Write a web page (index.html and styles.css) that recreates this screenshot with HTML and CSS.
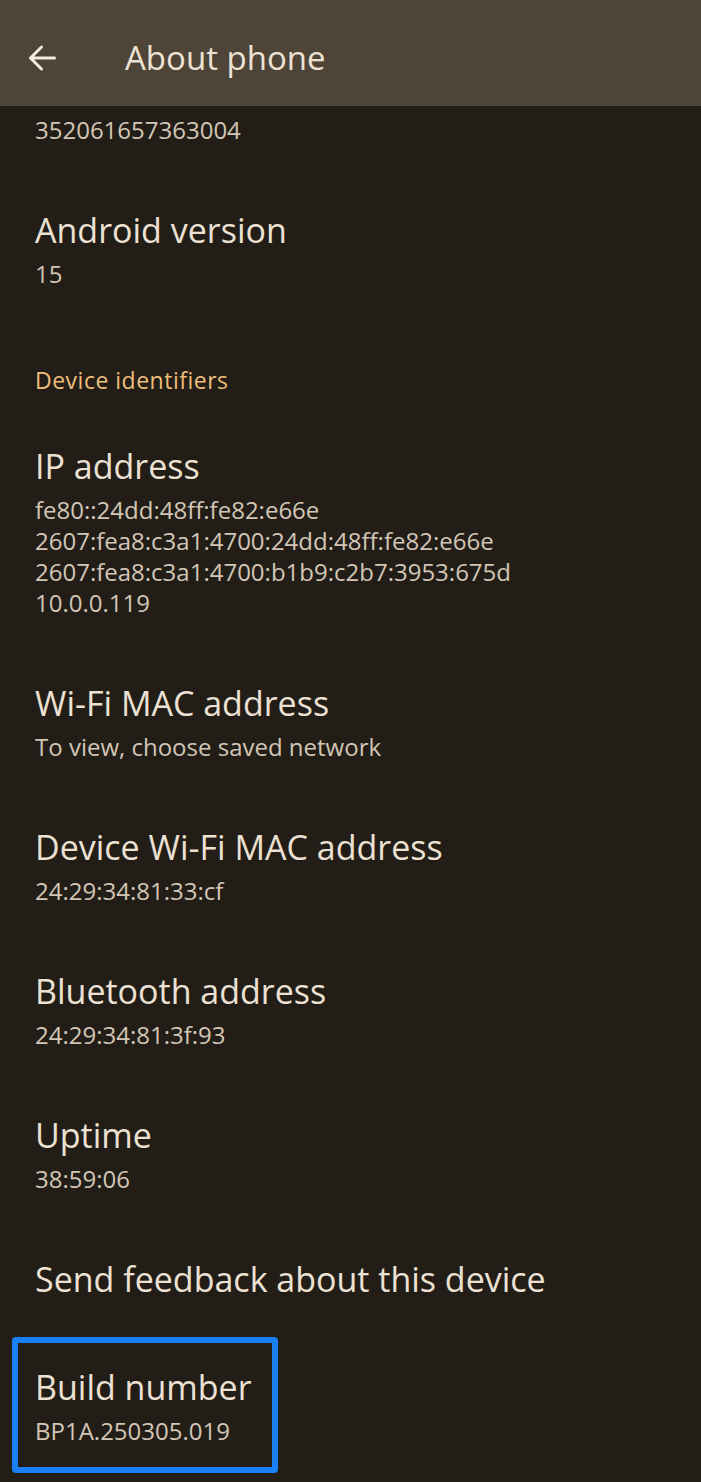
FILE: index.html
```html
<!DOCTYPE html>
<html lang="en">
<head>
<meta charset="utf-8">
<title>About phone</title>
<link rel="stylesheet" href="styles.css">
</head>
<body>
<div class="screen">
  <header class="appbar">
    <button class="back" aria-label="Back">
      <svg width="30" height="30" viewBox="0 0 30 30" aria-hidden="true">
        <path d="M27.5 15H4.5M14.5 4L3.5 15l11 11" fill="none" stroke="#f3ebe1" stroke-width="3" stroke-linecap="round" stroke-linejoin="round"/>
      </svg>
    </button>
    <h1 class="appbar-title">About phone</h1>
  </header>

  <main class="list">
    <div class="item item-cut">
      <div class="item-sub">352061657363004</div>
    </div>
    <div class="item">
      <div class="item-title">Android version</div>
      <div class="item-sub">15</div>
    </div>
    <div class="category">Device identifiers</div>
    <div class="item">
      <div class="item-title">IP address</div>
      <div class="item-sub">fe80::24dd:48ff:fe82:e66e<br>2607:fea8:c3a1:4700:24dd:48ff:fe82:e66e<br>2607:fea8:c3a1:4700:b1b9:c2b7:3953:675d<br>10.0.0.119</div>
    </div>
    <div class="item">
      <div class="item-title">Wi-Fi MAC address</div>
      <div class="item-sub">To view, choose saved network</div>
    </div>
    <div class="item">
      <div class="item-title">Device Wi-Fi MAC address</div>
      <div class="item-sub">24:29:34:81:33:cf</div>
    </div>
    <div class="item">
      <div class="item-title">Bluetooth address</div>
      <div class="item-sub">24:29:34:81:3f:93</div>
    </div>
    <div class="item">
      <div class="item-title">Uptime</div>
      <div class="item-sub">38:59:06</div>
    </div>
    <div class="item item-single">
      <div class="item-title">Send feedback about this device</div>
    </div>
    <div class="item item-highlight">
      <div class="item-title">Build number</div>
      <div class="item-sub">BP1A.250305.019</div>
    </div>
  </main>
</div>
</body>
</html>
```

FILE: styles.css
```css
*, *::before, *::after { box-sizing: border-box; }
html, body {
  margin: 0;
  padding: 0;
  background: #221e17;
}
body {
  font-family: "Open Sans", Roboto, "Liberation Sans", sans-serif;
  width: 701px;
  height: 1482px;
  overflow: hidden;
}
.screen {
  display: flex;
  flex-direction: column;
  width: 701px;
  min-height: 1482px;
  background: #221e17;
}
.appbar {
  display: flex;
  align-items: center;
  height: 106px;
  background: #4e4538;
  padding-left: 25px;
  padding-top: 10px;
}
.back {
  width: 34px;
  height: 34px;
  padding: 0;
  margin: 0;
  border: 0;
  background: none;
  display: flex;
  align-items: center;
  justify-content: center;
}
.appbar-title {
  margin: 0 0 0 66px;
  font-size: 33px;
  font-weight: 400;
  color: #ede2d3;
  line-height: 40px;
}
.list {
  display: flex;
  flex-direction: column;
}
.item {
  display: flex;
  flex-direction: column;
  padding: 32px 20px 31px 35px;
}
.item-cut {
  padding-top: 0;
  padding-bottom: 31px;
  margin-top: 8px;
}
.item-single {
  padding-bottom: 32px;
}
.item-title {
  font-size: 34px;
  line-height: 44px;
  color: #ece1d3;
}
.item-sub {
  margin-top: 6px;
  font-size: 24px;
  line-height: 31px;
  color: #d3c6b6;
}
.item-cut .item-sub { margin-top: 0; }
.category {
  padding: 45px 35px 17px;
  font-size: 23px;
  line-height: 30px;
  font-weight: 500;
  letter-spacing: 0.5px;
  color: #eebd7b;
}
.item-highlight {
  position: relative;
}
.item-highlight::after {
  content: "";
  position: absolute;
  left: 12px;
  top: 4px;
  width: 266px;
  height: 136px;
  border: 6px solid #1a80f5;
  border-radius: 4px;
}
```
